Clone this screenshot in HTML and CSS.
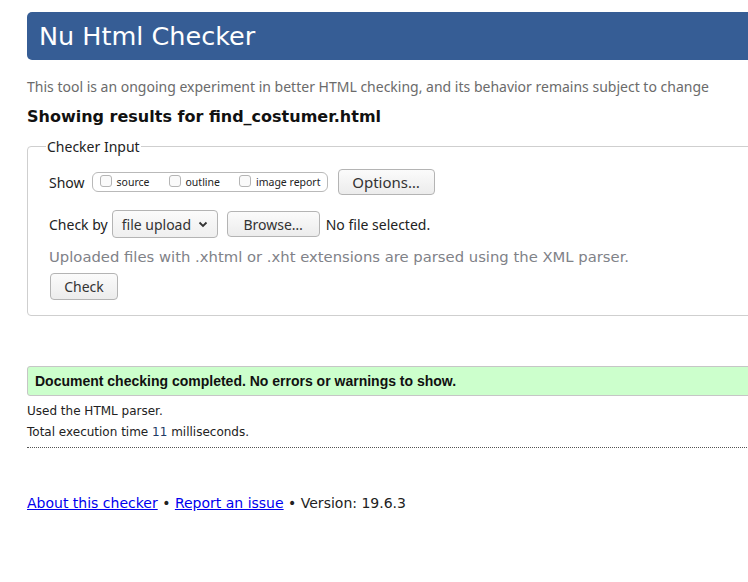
FILE: index.html
```html
<!DOCTYPE html>
<html lang="en">
<head>
<meta charset="utf-8">
<title>Nu Html Checker</title>
<link rel="stylesheet" href="styles.css">
</head>
<body>
<div class="page">
  <h1 class="banner">Nu Html Checker</h1>
  <p class="tagline">This tool is an ongoing experiment in better HTML checking, and its behavior remains subject to change</p>
  <h2 class="results-title">Showing results for find_costumer.html</h2>

  <fieldset class="checker">
    <legend class="checker-legend">Checker Input</legend>
    <div class="row show-row">
      <span class="row-label">Show</span>
      <div class="show-group">
        <label class="opt"><span class="cb"></span>source</label>
        <label class="opt"><span class="cb"></span>outline</label>
        <label class="opt"><span class="cb"></span>image report</label>
      </div>
      <span class="btn btn-options">Options…</span>
    </div>
    <div class="row by-row">
      <span class="row-label">Check by</span>
      <span class="select">file upload
        <svg class="chev" width="10" height="7" viewBox="0 0 10 7"><path d="M1.5 1.5 L5 5 L8.5 1.5" fill="none" stroke="#333" stroke-width="1.8"/></svg>
      </span>
      <span class="btn btn-browse">Browse…</span>
      <span class="nofile">No file selected.</span>
    </div>
    <p class="hint">Uploaded files with .xhtml or .xht extensions are parsed using the XML parser.</p>
    <span class="btn btn-check">Check</span>
  </fieldset>

  <div class="success">Document checking completed. No errors or warnings to show.</div>
  <p class="meta">Used the HTML parser.</p>
  <p class="meta">Total execution time <span class="num">11</span> milliseconds.</p>
  <hr class="dots">

  <p class="footer"><a href="#">About this checker</a> • <a href="#">Report an issue</a> • Version: 19.6.3</p>
</div>
</body>
</html>
```
FILE: styles.css
```css
html, body {
  margin: 0;
  padding: 0;
  overflow: hidden;
  background: #fff;
}
.page {
  width: 760px;
  padding: 12px 0 0 27px;
  font-family: "DejaVu Sans", sans-serif;
  color: #1a1a1a;
}
.banner {
  margin: 0;
  height: 48px;
  line-height: 48px;
  background: #365d95;
  color: #fff;
  font-family: "DejaVu Sans", sans-serif;
  font-weight: normal;
  font-size: 25.5px;
  padding-left: 12px;
  border-radius: 5px 0 0 5px;
}
.tagline {
  margin: 17px 0 0 0;
  font-family: "Noto Sans", sans-serif;
  font-size: 14px;
  line-height: 20px;
  color: #6b6b6b;
}
.results-title {
  margin: 9px 0 0 0;
  font-family: "DejaVu Sans", sans-serif;
  font-weight: bold;
  font-size: 16px;
  line-height: 22px;
  color: #111;
}
.checker {
  margin: 9px 0 0 0;
  padding: 0 0 15px 21px;
  border: 1px solid #cfcfcf;
  border-radius: 4px;
}
.checker-legend {
  margin-left: -3px;
  padding: 0 1px;
  font-family: "Noto Sans", sans-serif;
  font-size: 14px;
  color: #222;
}
.row {
  display: flex;
  align-items: center;
}
.row-label {
  font-family: "Noto Sans", sans-serif;
  font-size: 14px;
  color: #222;
}
.show-row {
  margin-top: 13px;
  height: 26px;
}
.show-group {
  display: flex;
  align-items: center;
  margin-left: 7px;
  height: 20px;
  box-sizing: border-box;
  border: 1px solid #b9b9b9;
  border-radius: 6px;
  padding: 0 6px 0 7px;
  font-family: "Noto Sans", sans-serif;
  font-size: 10.5px;
  color: #222;
  white-space: nowrap;
}
.opt {
  display: flex;
  align-items: center;
  margin-right: 19px;
}
.opt:last-child { margin-right: 0; }
.cb {
  width: 10px;
  height: 10px;
  border: 1px solid #b5b5b5;
  border-radius: 3px;
  background: #fafafa;
  margin-right: 5px;
  margin-top: -3px;
}
.btn {
  display: inline-flex;
  align-items: center;
  justify-content: center;
  box-sizing: border-box;
  border: 1px solid #b4b4b4;
  border-radius: 4px;
  background: linear-gradient(#fbfbfb, #ececec);
  font-family: "Noto Sans", sans-serif;
  font-size: 14px;
  color: #333;
}
.btn-options {
  margin-left: 10px;
  width: 97px;
  height: 26px;
  font-size: 15px;
}
.by-row {
  margin-top: 15px;
  height: 28px;
}
.select {
  display: inline-flex;
  align-items: center;
  margin-left: 4px;
  width: 106px;
  height: 28px;
  box-sizing: border-box;
  border: 1px solid #b4b4b4;
  border-radius: 4px;
  background: linear-gradient(#fbfbfb, #efefef);
  padding-left: 9px;
  font-family: "Noto Sans", sans-serif;
  font-size: 14px;
  color: #333;
}
.chev { margin-left: 7px; }
.btn-browse {
  margin-left: 9px;
  width: 93px;
  height: 26px;
}
.nofile {
  margin-left: 6px;
  font-family: "Noto Sans", sans-serif;
  font-size: 14px;
  color: #222;
}
.hint {
  margin: 9px 0 0 0;
  font-family: "DejaVu Sans", sans-serif;
  font-size: 14.8px;
  line-height: 20px;
  color: #7f8288;
}
.btn-check {
  margin: 6px 0 0 1px;
  width: 68px;
  height: 27px;
}
.success {
  margin-top: 50px;
  height: 30px;
  box-sizing: border-box;
  border: 1px solid #c6c6c6;
  border-radius: 3px;
  background: #ccffcc;
  padding-left: 7px;
  line-height: 28px;
  font-family: "Liberation Sans", Arial, sans-serif;
  font-weight: bold;
  font-size: 14px;
  color: #111;
}
.meta {
  margin: 0;
  font-family: "DejaVu Sans", sans-serif;
  font-size: 12px;
  line-height: 21px;
  color: #222;
}
.success + .meta { margin-top: 5px; }
.num { color: #1f3b66; }
.dots {
  margin: 4px 0 0 0;
  border: 0;
  border-top: 1px dotted #555;
  height: 0;
}
.footer {
  margin: 45px 0 0 0;
  font-family: "DejaVu Sans", sans-serif;
  font-size: 14px;
  line-height: 20px;
  color: #222;
}
.footer a { color: #0000ee; text-decoration: underline; }
```
